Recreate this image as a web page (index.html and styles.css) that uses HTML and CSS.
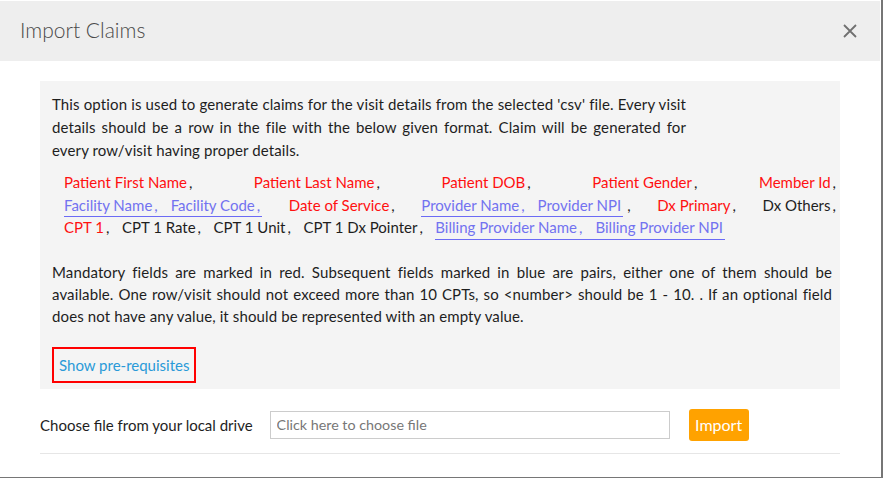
FILE: index.html
```html
<!DOCTYPE html>
<html lang="en">
<head>
    <meta charset="UTF-8">
    <title>Import Claims</title>
    <link rel="stylesheet" href="styles.css">
</head>
<body>
    <div class="modal">
        <header class="modal-header">
            <h1>Import Claims</h1>
            <button class="close" aria-label="Close">
                <svg width="14" height="14" viewBox="0 0 14 14"><path d="M1 1L13 13M13 1L1 13" stroke="#707070" stroke-width="1.8" fill="none"/></svg>
            </button>
        </header>
        <div class="modal-body">
            <!-- Format info -->
            <section class="info">
                <p class="intro">This option is used to generate claims for the visit details from the selected 'csv' file. Every visit details should be a row in the file with the below given format. Claim will be generated for every row/visit having proper details.</p>

                <div class="fields">
                    <div class="field-row">
                        <span class="field"><span class="req">Patient First Name</span><span class="comma">,</span></span>
                        <span class="field"><span class="req">Patient Last Name</span><span class="comma">,</span></span>
                        <span class="field"><span class="req">Patient DOB</span><span class="comma">,</span></span>
                        <span class="field"><span class="req">Patient Gender</span><span class="comma">,</span></span>
                        <span class="field"><span class="req">Member Id</span><span class="comma">,</span></span>
                    </div>
                    <div class="field-row">
                        <span class="pair">
                            <span class="field"><span class="opt">Facility Name</span><span class="comma opt">,</span></span>
                            <span class="field"><span class="opt">Facility Code</span><span class="comma opt">,</span></span>
                        </span>
                        <span class="field"><span class="req">Date of Service</span><span class="comma">,</span></span>
                        <span class="field">
                            <span class="pair">
                                <span class="field"><span class="opt">Provider Name</span><span class="comma opt">,</span></span>
                                <span class="field"><span class="opt">Provider NPI</span></span>
                            </span><span class="comma wide">,</span>
                        </span>
                        <span class="field"><span class="req">Dx Primary</span><span class="comma">,</span></span>
                        <span class="field"><span>Dx Others</span><span class="comma">,</span></span>
                    </div>
                    <div class="field-row last">
                        <span class="field"><span class="req">CPT 1</span><span class="comma">,</span></span>
                        <span class="field"><span>CPT 1 Rate</span><span class="comma">,</span></span>
                        <span class="field"><span>CPT 1 Unit</span><span class="comma">,</span></span>
                        <span class="field"><span>CPT 1 Dx Pointer</span><span class="comma">,</span></span>
                        <span class="pair">
                            <span class="field"><span class="opt">Billing Provider Name</span><span class="comma opt">,</span></span>
                            <span class="field"><span class="opt">Billing Provider NPI</span></span>
                        </span>
                    </div>
                </div>

                <p class="note">Mandatory fields are marked in red. Subsequent fields marked in blue are pairs, either one of them should be available. One row/visit should not exceed more than 10 CPTs, so &lt;number&gt; should be 1 - 10. . If an optional field does not have any value, it should be represented with an empty value.</p>

                <a href="#" class="prereq">Show pre-requisites</a>
            </section>

            <!-- File chooser -->
            <div class="upload">
                <label for="fileInput">Choose file from your local drive</label>
                <input type="text" id="fileInput" placeholder="Click here to choose file">
                <button class="btn-import">Import</button>
            </div>
        </div>
    </div>
</body>
</html>
```

FILE: styles.css
```css
body {
    margin: 0;
    background: #767676;
    font-family: Lato, "Open Sans", sans-serif;
    font-size: 15px;
    color: #1e1e1e;
}
.modal {
    width: 881px;
    height: 477px;
    box-sizing: border-box;
    padding: 1px 1px 0 0;
    background: #fff;
    overflow: hidden;
}
.modal-header {
    height: 60px;
    background: #eee;
    display: flex;
    align-items: center;
    justify-content: space-between;
    padding: 0 23px 0 20px;
}
.modal-header h1 {
    margin: 0 0 4px;
    font-size: 21px;
    font-weight: 300;
    color: #4a4a4a;
}
.close {
    border: none;
    background: none;
    padding: 0;
    display: flex;
    cursor: pointer;
}
.modal-body {
    padding: 20px 40px;
}
.info {
    background: #f4f4f4;
    padding: 12px 8px 6px 12px;
}
.intro {
    margin: 0;
    width: 634px;
    line-height: 23px;
    letter-spacing: 0.12px;
    text-align: justify;
}
.fields {
    margin: 10px -4px 0 12px;
}
.field-row {
    display: flex;
    justify-content: space-between;
    height: 22.5px;
    line-height: 21px;
}
.field-row.last {
    justify-content: flex-start;
    gap: 12.5px;
}
.field {
    white-space: nowrap;
}
.pair {
    display: inline-flex;
    gap: 13px;
    border-bottom: 1px solid #6b6bf5;
    padding-right: 2px;
}
.req {
    color: #ff1010;
}
.opt {
    color: #7272f0;
}
.comma {
    margin-left: 2px;
}
.comma.wide {
    margin-left: 4px;
}
.note {
    margin: 21px 0 0;
    line-height: 22px;
    letter-spacing: 0.12px;
    text-align: justify;
}
.prereq {
    display: inline-block;
    margin-top: 20px;
    padding: 5px 5px;
    border: 2px solid #f00;
    line-height: 22px;
    color: #2a9ad8;
    text-decoration: none;
}
.upload {
    display: flex;
    align-items: center;
    margin-top: 20px;
    padding-bottom: 12px;
    border-bottom: 1px solid #e6e6e6;
}
.upload label {
    margin-right: 17px;
}
.upload input {
    width: 400px;
    height: 28px;
    box-sizing: border-box;
    border: 1px solid #ccc;
    padding: 0 6px;
    font-family: inherit;
    font-size: 14.3px;
}
.upload input::placeholder {
    color: #777;
}
.btn-import {
    margin-left: 19px;
    width: 60px;
    height: 32px;
    border: none;
    border-radius: 3px;
    background: #ffa200;
    color: #fff;
    font-family: inherit;
    font-size: 16px;
    cursor: pointer;
}
```
